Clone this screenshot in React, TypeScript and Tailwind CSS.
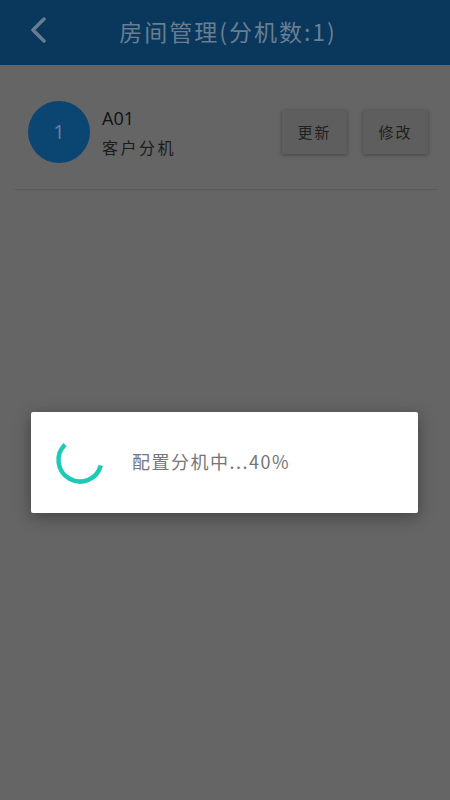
import React from "react";

export default function App() {
  const cjk = { fontFamily: '"Noto Sans CJK SC", "Noto Sans", sans-serif' };
  return (
    <div className="relative w-[450px] h-[800px] bg-[#656565] overflow-hidden" style={cjk}>
      {/* Header */}
      <div className="relative h-[65px] bg-[#09385c] flex items-center justify-center">
        <svg className="absolute left-[29px] top-[17px]" width="18" height="26" viewBox="0 0 18 26">
          <polyline points="15,2 4,13 15,24" fill="none" stroke="#677d92" strokeWidth="3.5" strokeLinecap="round" strokeLinejoin="round" />
        </svg>
        <div className="text-[23px] leading-none tracking-[2px] text-[#687e93] ml-[6px] -mt-[2px]">
          房间管理(分机数:1)
        </div>
      </div>

      {/* List */}
      <div className="mx-[15px] mr-[12px] border-b border-[#5a5a5a] pl-[13px] pr-[10px] pt-[36px] pb-[26px] flex items-center">
        <div className="w-[62px] h-[62px] rounded-full bg-[#0b4572] flex items-center justify-center text-[20px] text-[#67839c]" style={{ fontFamily: '"Open Sans", sans-serif' }}>
          1
        </div>
        <div className="ml-[12px] flex flex-col">
          <div className="text-[18px] leading-[22px] text-[#111]" style={{ fontFamily: '"Open Sans", sans-serif' }}>A01</div>
          <div className="mt-[8px] text-[16px] leading-[20px] tracking-[2.5px] text-[#1c1c1c]">客户分机</div>
        </div>
        <div className="ml-auto flex gap-[16px]">
          <div className="w-[65px] h-[44px] bg-[#5e5e5e] shadow-[0_1px_4px_rgba(0,0,0,0.35)] flex items-center justify-center text-[15px] tracking-[2px] text-[#1f1f1f]">更新</div>
          <div className="w-[65px] h-[44px] bg-[#5e5e5e] shadow-[0_1px_4px_rgba(0,0,0,0.35)] flex items-center justify-center text-[15px] tracking-[2px] text-[#1f1f1f]">修改</div>
        </div>
      </div>

      {/* Loading dialog */}
      <div className="absolute left-[31px] top-[412px] w-[387px] h-[101px] bg-white rounded-[2px] shadow-[0_4px_16px_rgba(0,0,0,0.35)] flex items-center">
        <svg className="ml-[21px] -mt-[5px]" width="56" height="56" viewBox="-28 -28 56 56">
          <path d="M -14.94 -15.47 A 21.5 21.5 0 1 0 20.81 5.38" fill="none" stroke="#1ecab5" strokeWidth="4.5" />
        </svg>
        <div className="ml-[24px] text-[18px] tracking-[1.5px] text-[#767676] -mt-[3px]">配置分机中...40%</div>
      </div>
    </div>
  );
}
